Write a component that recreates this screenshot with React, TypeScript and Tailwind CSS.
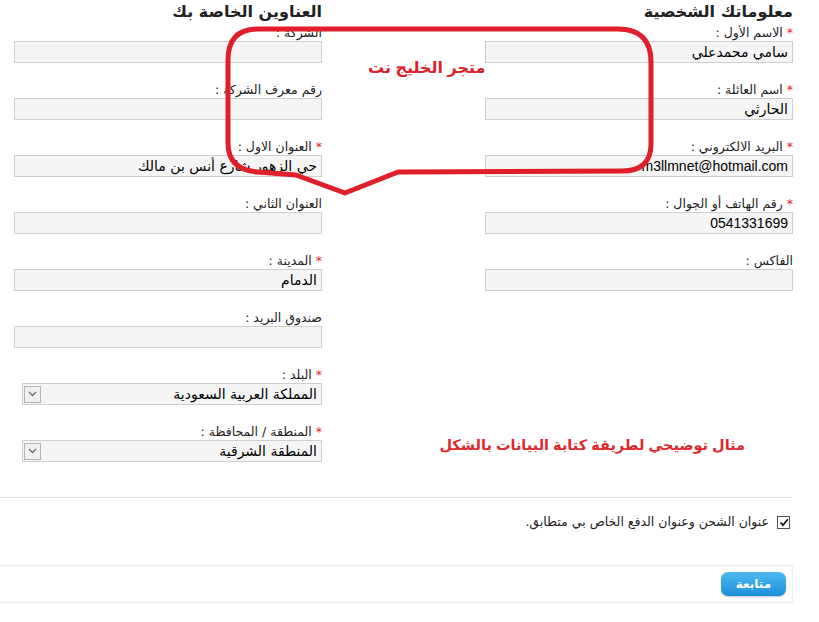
import React from 'react';

type Field = { label: string; required?: boolean; value?: string; latin?: boolean };

const PERSONAL: Field[] = [
  { label: 'الاسم الأول :', required: true, value: 'سامي محمدعلي' },
  { label: 'اسم العائلة :', required: true, value: 'الحارثي' },
  { label: 'البريد الالكتروني :', required: true, value: 'm3llmnet@hotmail.com', latin: true },
  { label: 'رقم الهاتف أو الجوال :', required: true, value: '0541331699', latin: true },
  { label: 'الفاكس :' },
];

const ADDRESS: Field[] = [
  { label: 'الشركة :' },
  { label: 'رقم معرف الشركة :' },
  { label: 'العنوان الاول :', required: true, value: 'حي الزهور شارع أنس بن مالك' },
  { label: 'العنوان الثاني :' },
  { label: 'المدينة :', required: true, value: 'الدمام' },
  { label: 'صندوق البريد :' },
];

const SELECTS: Field[] = [
  { label: 'البلد :', required: true, value: 'المملكة العربية السعودية' },
  { label: 'المنطقة / المحافظة :', required: true, value: 'المنطقة الشرقية' },
];

function Label({ field }: { field: Field }) {
  return (
    <div className="h-[16px] text-[12.5px] leading-[16px] text-[#222]">
      {field.required && <span className="text-[#e0262e] ml-1">*</span>}
      {field.label}
    </div>
  );
}

function TextField({ field }: { field: Field }) {
  return (
    <div className="mb-[19px]">
      <Label field={field} />
      <div
        className={`h-[22px] border border-[#cfcfcf] bg-[#f5f5f5] px-[4px] leading-[20px] text-black ${
          field.latin ? "text-[14px] font-['Liberation_Sans',sans-serif]" : 'text-[14px]'
        }`}
      >
        <span dir={field.latin ? 'ltr' : 'rtl'}>{field.value}</span>
      </div>
    </div>
  );
}

function SelectField({ field }: { field: Field }) {
  return (
    <div className="mb-[19px] ml-[8px]">
      <Label field={field} />
      <div className="flex h-[22px] items-center justify-between border border-[#cfcfcf] bg-[#f5f5f5] pr-[4px] pl-[1px] text-[14px] text-black">
        <span>{field.value}</span>
        <span className="flex h-[17px] w-[17px] items-center justify-center border border-[#b5b5b5] bg-[#f0f0f0]">
          <svg width="9" height="6" viewBox="0 0 9 6" fill="none">
            <path d="M1 1l3.5 3.5L8 1" stroke="#6b6b6b" strokeWidth="1.3" />
          </svg>
        </span>
      </div>
    </div>
  );
}

export default function App() {
  return (
    <div
      dir="rtl"
      className="relative h-[622px] w-[819px] overflow-hidden bg-white font-['DejaVu_Sans',sans-serif]"
    >
      <div className="flex gap-[163px] pr-[26px]">
        {/* personal info */}
        <div className="w-[308px]">
          <h2 className="h-[25px] pt-[1px] text-[16px] font-bold leading-[22px] text-[#222]">
            معلوماتك الشخصية
          </h2>
          {PERSONAL.map((f) => (
            <TextField key={f.label} field={f} />
          ))}
          <div className="mt-[143px] whitespace-nowrap pr-[48px] text-[14.5px] font-bold leading-[22px] text-[#dc2a30] font-['Liberation_Sans','DejaVu_Sans',sans-serif]">
            مثال توضيحي لطريقة كتابة البيانات بالشكل
          </div>
        </div>

        {/* addresses */}
        <div className="w-[308px]">
          <h2 className="h-[25px] pt-[1px] text-[16px] font-bold leading-[22px] text-[#222]">
            العناوين الخاصة بك
          </h2>
          {ADDRESS.map((f) => (
            <TextField key={f.label} field={f} />
          ))}
          {SELECTS.map((f) => (
            <SelectField key={f.label} field={f} />
          ))}
        </div>
      </div>

      <div className="mt-[16px] mr-[26px] border-t border-[#e3e3e3]" />

      <label className="mt-[15px] flex items-center gap-[8px] pr-[29px] text-[12.5px] text-[#222]">
        <span className="flex h-[13px] w-[13px] items-center justify-center border border-[#555] bg-white">
          <svg width="10" height="9" viewBox="0 0 10 9" fill="none">
            <path d="M1.5 4.5l2.5 2.7L8.8 1.3" stroke="#111" strokeWidth="1.8" />
          </svg>
        </span>
        عنوان الشحن وعنوان الدفع الخاص بي متطابق.
      </label>

      <div className="mt-[33px] mr-[26px] ml-[-2px] flex h-[38px] items-center border border-[#ececec] pr-[6px]">
        <button className="h-[24px] w-[65px] rounded-[7px] bg-gradient-to-b from-[#4cbaf0] to-[#1c8fd8] text-[12px] font-bold text-white shadow-[0_1px_1px_rgba(0,0,0,0.2)]">
          متابعة
        </button>
      </div>

      {/* annotation bubble */}
      <svg className="pointer-events-none absolute left-0 top-0" width="819" height="622">
        <path
          d="M258 29 L618 29 Q651 29 651 62 L651 144 Q651 172 620 171 L398 172 L345 193 L296 175 L258 172 Q228 170 228 143 L228 60 Q228 29 258 29 Z"
          fill="none"
          stroke="#e01f2a"
          strokeWidth="5"
          strokeLinejoin="round"
        />
      </svg>
      <div
        dir="rtl"
        className="absolute left-[368px] top-[56px] whitespace-nowrap text-[16px] font-bold text-[#d9232b] font-['Liberation_Sans','DejaVu_Sans',sans-serif]"
      >
        متجر الخليج نت
      </div>
    </div>
  );
}
